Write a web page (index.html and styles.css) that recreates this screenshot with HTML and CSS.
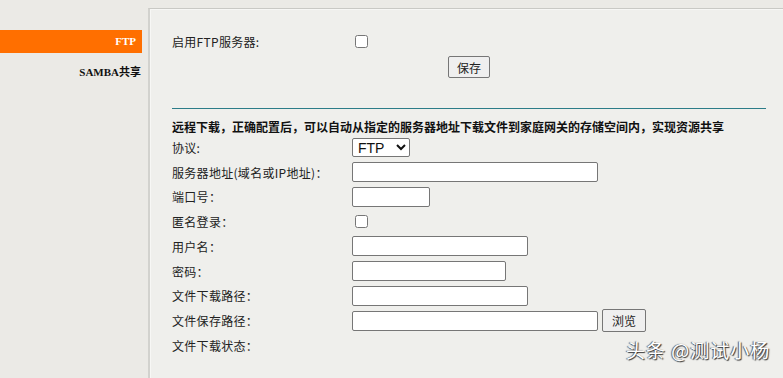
FILE: index.html
```html
<!DOCTYPE html>
<html lang="zh-CN">
<head>
<meta charset="utf-8">
<title>FTP</title>
<link rel="stylesheet" href="styles.css">
</head>
<body>
<div class="page">
  <nav class="sidebar">
    <div class="nav-item active">FTP</div>
    <div class="nav-item">SAMBA共享</div>
  </nav>
  <main class="panel">
    <div class="enable-row">
      <span class="label">启用FTP服务器:</span>
      <input type="checkbox" class="chk">
    </div>
    <div class="save-row"><button class="btn save">保存</button></div>
    <div class="divider"></div>
    <div class="desc">远程下载，正确配置后，可以自动从指定的服务器地址下载文件到家庭网关的存储空间内，实现资源共享</div>
    <div class="form">
      <div class="row"><span class="label">协议:</span><select class="sel"><option>FTP</option></select></div>
      <div class="row"><span class="label">服务器地址(域名或IP地址)：</span><input class="inp w246"></div>
      <div class="row"><span class="label">端口号：</span><input class="inp w78"></div>
      <div class="row"><span class="label">匿名登录：</span><input type="checkbox" class="chk"></div>
      <div class="row"><span class="label">用户名：</span><input class="inp w176"></div>
      <div class="row"><span class="label">密码：</span><input class="inp w154" type="password"></div>
      <div class="row"><span class="label">文件下载路径：</span><input class="inp w176"></div>
      <div class="row"><span class="label">文件保存路径：</span><input class="inp w246"><button class="btn browse">浏览</button></div>
      <div class="row"><span class="label">文件下载状态：</span></div>
    </div>
    <div class="watermark">头条 @测试小杨</div>
  </main>
</div>
</body>
</html>
```
FILE: styles.css
```css
* { box-sizing: border-box; }
html, body { margin: 0; padding: 0; }
body {
  background: #ebeae6;
  font-family: "Microsoft YaHei", "Noto Sans CJK SC", "Noto Sans", sans-serif;
  font-size: 12px;
  color: #222;
  width: 783px;
  height: 378px;
  overflow: hidden;
}
.page { display: flex; height: 378px; }
.sidebar { width: 148px; padding-top: 30px; flex: none; }
.nav-item {
  width: 142px;
  height: 23px;
  line-height: 23px;
  text-align: right;
  padding-right: 1px;
  font-family: "Liberation Serif", "Noto Sans CJK SC", serif;
  font-weight: bold;
  font-size: 11px;
  color: #111;
  margin-bottom: 8px;
}
.nav-item.active { background: #ff6f00; color: #fff; padding-right: 6px; }
.panel {
  position: relative;
  flex: 1;
  margin-top: 8px;
  background: #efefec;
  border-top: 1px solid #c9c9c5;
  border-left: 2px solid #d2d2ce;
  box-shadow: inset 1px 1px 0 #f7f7f5;
  padding: 0 17px 0 22px;
}
.label { color: #222; letter-spacing: 0.3px; }
.enable-row {
  display: flex;
  align-items: center;
  height: 20px;
  margin-top: 22px;
}
.enable-row .label { width: 183px; }
.chk {
  margin: 0;
  width: 13px;
  height: 13px;
}
.save-row { display: flex; padding-left: 276px; margin-top: 5px; }
.btn {
  font-family: "Microsoft YaHei", "Noto Sans CJK SC", sans-serif;
  font-size: 12px;
  color: #222;
  background: #efefef;
  border: 1px solid #767676;
  border-radius: 2px;
  padding: 0;
}
.save { width: 42px; height: 22px; }
.divider {
  margin-top: 30px;
  height: 1px;
  background: #2c7c88;
}
.desc {
  font-weight: bold;
  margin-top: 10px;
  line-height: 16px;
  color: #111;
  white-space: nowrap;
}
.form { margin-top: 0; }
.row {
  display: flex;
  align-items: center;
  height: 24.75px;
}
.row .label { width: 180px; flex: none; }
.row .chk { margin-left: 3px; }
.inp {
  height: 20px;
  border: 1px solid #767676;
  border-radius: 2px;
  background: #fff;
  margin: 0;
}
.w246 { width: 246px; }
.w78 { width: 78px; }
.w176 { width: 176px; }
.w154 { width: 154px; }
.sel {
  width: 58px;
  height: 19px;
  font-family: "Liberation Sans", Arial, sans-serif;
  font-size: 14px;
  border: 1px solid #767676;
  border-radius: 2px;
  background: #fff;
  color: #111;
  margin: 0;
  padding: 0 0 0 1px;
}
.browse { width: 44px; height: 23px; margin-left: 4px; }
.watermark {
  position: absolute;
  left: 476px;
  top: 329px;
  font-size: 19px;
  line-height: 24px;
  color: #fff;
  letter-spacing: 1px;
  text-shadow: 1px 1px 1px #333, -1px 0 1px #555;
}
```
